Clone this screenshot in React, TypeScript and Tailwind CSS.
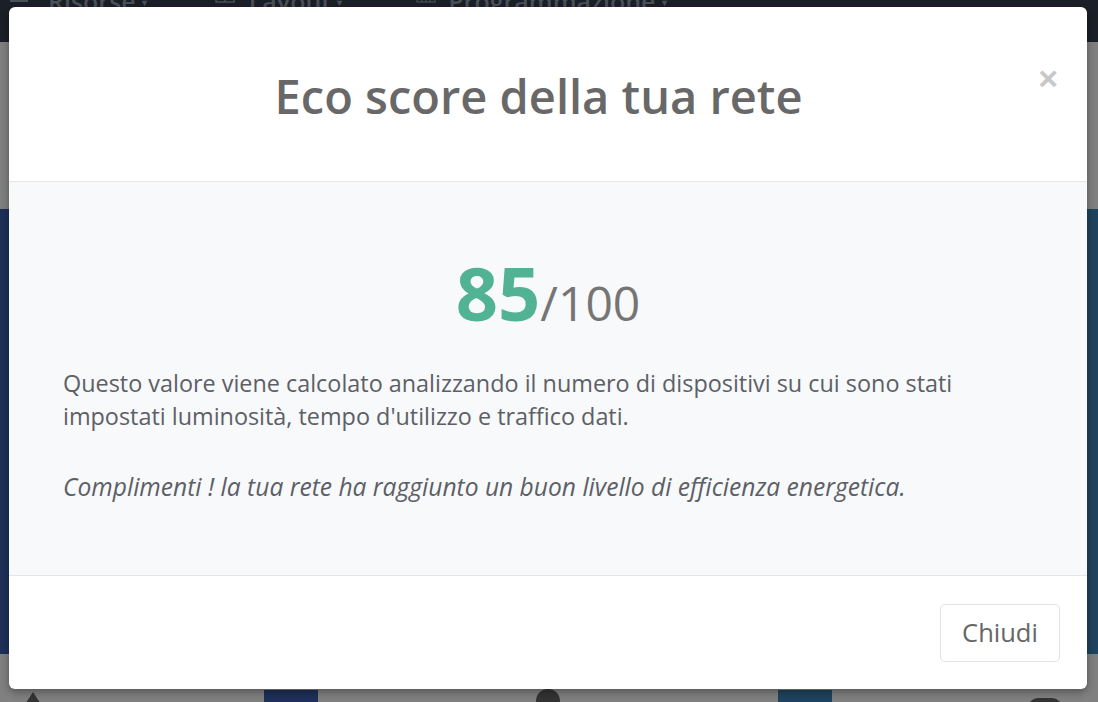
import React from "react";

function NavIcon({ kind }: { kind: "monitor" | "layout" | "grid" }) {
  if (kind === "monitor")
    return (
      <svg width="18" height="16" viewBox="0 0 18 16" fill="none" stroke="#4b5059" strokeWidth="2">
        <rect x="1" y="-6" width="16" height="13" />
      </svg>
    );
  if (kind === "layout")
    return (
      <svg width="20" height="16" viewBox="0 0 20 16" fill="none" stroke="#4b5059" strokeWidth="1.5">
        <rect x="1" y="-6" width="18" height="14" />
        <line x1="10" y1="-6" x2="10" y2="8" />
      </svg>
    );
  return (
    <svg width="20" height="16" viewBox="0 0 20 16" fill="none" stroke="#4b5059" strokeWidth="1.2">
      <rect x="1" y="-6" width="18" height="14" />
      <line x1="6" y1="-6" x2="6" y2="8" />
      <line x1="10" y1="-6" x2="10" y2="8" />
      <line x1="14" y1="-6" x2="14" y2="8" />
      <line x1="1" y1="3" x2="19" y2="3" />
    </svg>
  );
}

export default function App() {
  const font = { fontFamily: '"Open Sans", "Noto Sans", sans-serif' };
  return (
    <div className="relative w-[1098px] h-[702px] overflow-hidden bg-[#808080]" style={font}>
      {/* top bar */}
      <div className="h-[42px] bg-[#1b1f27] flex items-start overflow-hidden">
        <div className="flex items-center -mt-[11px] text-[25px] text-[#4b5059] font-semibold leading-none">
          <div className="flex items-center ml-[10px] gap-[20px]">
            <NavIcon kind="monitor" />
            <span>Risorse</span>
            <span className="text-[10px] -ml-[14px]">▾</span>
          </div>
          <div className="flex items-center ml-[68px] gap-[14px]">
            <NavIcon kind="layout" />
            <span>Layout</span>
            <span className="text-[10px] -ml-[8px]">▾</span>
          </div>
          <div className="flex items-center ml-[74px] gap-[12px]">
            <NavIcon kind="grid" />
            <span>Programmazione</span>
            <span className="text-[10px] -ml-[6px]">▾</span>
          </div>
        </div>
      </div>
      {/* side strips */}
      <div className="mt-[167px] h-[445px] flex justify-between">
        <div className="w-[20px] bg-[#1e3058]" />
        <div className="w-[20px] bg-[#1f435e]" />
      </div>
      {/* bottom shapes */}
      <div className="relative h-[48px]">
        <div className="absolute left-[20px] top-[38px] w-0 h-0 border-l-[13px] border-r-[13px] border-b-[20px] border-l-transparent border-r-transparent border-b-[#333]" />
        <div className="absolute left-[264px] top-[36px] w-[54px] h-[20px] bg-[#1e3058]" />
        <div className="absolute left-[536px] top-[35px] w-[24px] h-[30px] rounded-t-full bg-[#333]" />
        <div className="absolute left-[778px] top-[36px] w-[54px] h-[20px] bg-[#1f435e]" />
        <div className="absolute left-[1028px] top-[44px] w-[34px] h-[20px] rounded-full bg-[#333]" />
      </div>

      {/* modal */}
      <div className="absolute left-[9px] top-[7px] w-[1078px] bg-white rounded-[6px] shadow-[0_3px_9px_rgba(0,0,0,0.35)] overflow-hidden">
        <div className="h-[175px] flex border-b border-[#e3e5e8] pl-[30px] pr-[29px]">
          <h1 className="flex-1 self-center text-center text-[47px] font-semibold text-[#686868] leading-none mt-[4px]">
            Eco score della tua rete
          </h1>
          <button className="self-start mt-[54px] text-[34px] font-bold leading-none text-[#c8c8c8]" style={{ fontFamily: '"Liberation Sans", Arial, sans-serif' }}>
            ×
          </button>
        </div>
        <div className="h-[394px] bg-[#f8f9fb] border-b border-[#e3e5e8] px-[54px] pt-[74px]">
          <div className="text-center leading-none">
            <span className="text-[74px] font-bold text-[#52b394]">85</span>
            <span className="text-[48px] text-[#757575]">/100</span>
          </div>
          <p className="mt-[37px] text-[23.4px] leading-[33.4px] text-[#5c6066]">
            Questo valore viene calcolato analizzando il numero di dispositivi su cui sono stati impostati luminosità, tempo d'utilizzo e traffico dati.
          </p>
          <p className="mt-[36px] text-[24.6px] leading-[33.4px] text-[#5c6066] italic">
            Complimenti ! la tua rete ha raggiunto un buon livello di efficienza energetica.
          </p>
        </div>
        <div className="h-[113px] flex items-center justify-end pr-[27px]">
          <button className="w-[120px] h-[58px] rounded-[5px] border border-[#e3e3e3] text-[25.5px] text-[#666] bg-white">
            Chiudi
          </button>
        </div>
      </div>
    </div>
  );
}
